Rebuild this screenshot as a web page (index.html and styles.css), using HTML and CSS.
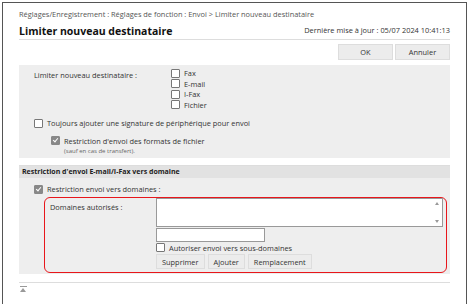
FILE: index.html
```html
<!DOCTYPE html>
<html lang="fr">
<head>
  <meta charset="UTF-8" />
  <title>Limiter nouveau destinataire</title>
  <link rel="stylesheet" href="styles.css">
</head>
<body>
  <div class="frame">
    <div class="crumbs">Réglages/Enregistrement : Réglages de fonction : Envoi &gt; Limiter nouveau destinataire</div>
    <div class="title-row">
      <h1>Limiter nouveau destinataire</h1>
      <span class="updated">Dernière mise à jour : 05/07 2024 10:41:13</span>
    </div>
    <div class="actions">
      <button class="btn wide">OK</button>
      <button class="btn wide">Annuler</button>
    </div>

    <div class="panel top-panel">
      <div class="limit-row">
        <span class="label">Limiter nouveau destinataire :</span>
        <div class="checks">
          <label class="check"><span class="box"></span>Fax</label>
          <label class="check"><span class="box"></span>E-mail</label>
          <label class="check"><span class="box"></span>I-Fax</label>
          <label class="check"><span class="box"></span>Fichier</label>
        </div>
      </div>
      <label class="check sig"><span class="box"></span>Toujours ajouter une signature de périphérique pour envoi</label>
      <div class="sub">
        <label class="check"><span class="box on"></span>Restriction d'envoi des formats de fichier</label>
        <div class="note">(sauf en cas de transfert).</div>
      </div>
    </div>

    <div class="section-head">Restriction d'envoi E-mail/I-Fax vers domaine</div>
    <div class="panel bottom-panel">
      <label class="check"><span class="box on"></span>Restriction envoi vers domaines :</label>
      <div class="highlight">
        <span class="label">Domaines autorisés :</span>
        <div class="domain-field">
          <div class="list">
            <span class="arrow up"></span>
            <span class="arrow down"></span>
          </div>
          <div class="entry"></div>
          <label class="check"><span class="box"></span>Autoriser envoi vers sous-domaines</label>
          <div class="list-buttons">
            <button class="btn">Supprimer</button>
            <button class="btn">Ajouter</button>
            <button class="btn">Remplacement</button>
          </div>
        </div>
      </div>
    </div>

    <div class="foot">
      <span class="to-top"><span class="bar"></span><span class="tri"></span></span>
    </div>
  </div>
</body>
</html>
```

FILE: styles.css
```css
body {
  margin: 0;
  background: #fff;
  font-family: "Open Sans", "Noto Sans", sans-serif;
  font-size: 7.4px;
  color: #333;
}

.frame {
  margin: 2px 2px 0 2px;
  height: 302px;
  border: 1px solid #555;
  border-bottom: none;
  padding: 0 16px;
  box-sizing: border-box;
}

.crumbs {
  margin-top: 6px;
  color: #555;
  line-height: 10px;
}

.title-row {
  display: flex;
  justify-content: space-between;
  align-items: flex-end;
  margin-top: 6px;
  padding-bottom: 1px;
  border-bottom: 1px solid #ddd;
}

h1 {
  margin: 0;
  font-size: 10.5px;
  font-weight: bold;
  color: #111;
  line-height: 13px;
}

.updated {
  line-height: 10px;
  padding-bottom: 3px;
}

.actions {
  display: flex;
  justify-content: flex-end;
  gap: 2px;
  margin-top: 4px;
}

.btn {
  font-family: inherit;
  font-size: 7.4px;
  color: #333;
  background: #ececec;
  border: 1px solid #ddd;
  padding: 0 6px;
  height: 16px;
  line-height: 14px;
}

.btn.wide {
  width: 55px;
}

.panel {
  background: #eeeeee;
}

.top-panel {
  margin-top: 5px;
  padding: 3px 16px 3px 15px;
}

.limit-row {
  display: flex;
}

.limit-row .label {
  width: 137px;
  line-height: 10px;
  padding-top: 2px;
}

.checks {
  display: flex;
  flex-direction: column;
}

.check {
  display: flex;
  align-items: center;
  line-height: 10.5px;
}

.box {
  width: 7px;
  height: 7px;
  border: 1px solid #777;
  border-radius: 1px;
  background: #fff;
  margin-right: 4px;
  position: relative;
}

.box.on {
  background: #888;
  border-color: #888;
}

.box.on::after {
  content: "";
  position: absolute;
  left: 2px;
  top: 0;
  width: 2px;
  height: 4px;
  border: solid #fff;
  border-width: 0 1.2px 1.2px 0;
  transform: rotate(40deg);
}

.sig {
  margin-top: 8px;
}

.sub {
  margin: 7px 0 0 17px;
}

.note {
  font-size: 6px;
  color: #666;
  margin: 1px 0 0 13px;
  line-height: 8px;
}

.section-head {
  margin-top: 7px;
  background: #e2e2e2;
  border-top: 1px solid #ddd;
  font-weight: bold;
  font-size: 7px;
  color: #222;
  padding: 0 3px;
  line-height: 12px;
}

.bottom-panel {
  padding: 6px 3px 1px 15px;
}

.highlight {
  display: flex;
  margin: 2px 0 0 10px;
  border: 1.5px solid #e8161b;
  border-radius: 6px;
  padding: 0 3px 3px 5px;
}

.highlight .label {
  width: 106px;
  line-height: 10px;
  padding-top: 4px;
}

.domain-field {
  flex: 1;
}

.list {
  height: 27px;
  background: #fff;
  border: 1px solid #999;
  position: relative;
}

.arrow {
  position: absolute;
  right: 3px;
  width: 0;
  height: 0;
  border-left: 2.5px solid transparent;
  border-right: 2.5px solid transparent;
}

.arrow.up {
  top: 3px;
  border-bottom: 3px solid #999;
}

.arrow.down {
  bottom: 3px;
  border-top: 3px solid #999;
}

.entry {
  width: 107px;
  height: 12px;
  background: #fff;
  border: 1px solid #999;
  margin-top: 1px;
}

.domain-field .check {
  margin-top: 1px;
}

.list-buttons {
  display: flex;
  gap: 3px;
  margin-top: 1px;
}

.list-buttons .btn {
  height: 15px;
  padding: 0 5px;
}

.foot {
  margin-top: 8px;
  border-top: 1px solid #ddd;
  padding-top: 3px;
}

.to-top {
  display: flex;
  flex-direction: column;
  align-items: center;
  width: 8px;
}

.to-top .bar {
  width: 7px;
  height: 1px;
  background: #999;
}

.to-top .tri {
  margin-top: 1px;
  border-left: 3.5px solid transparent;
  border-right: 3.5px solid transparent;
  border-bottom: 4px solid #999;
}
```
